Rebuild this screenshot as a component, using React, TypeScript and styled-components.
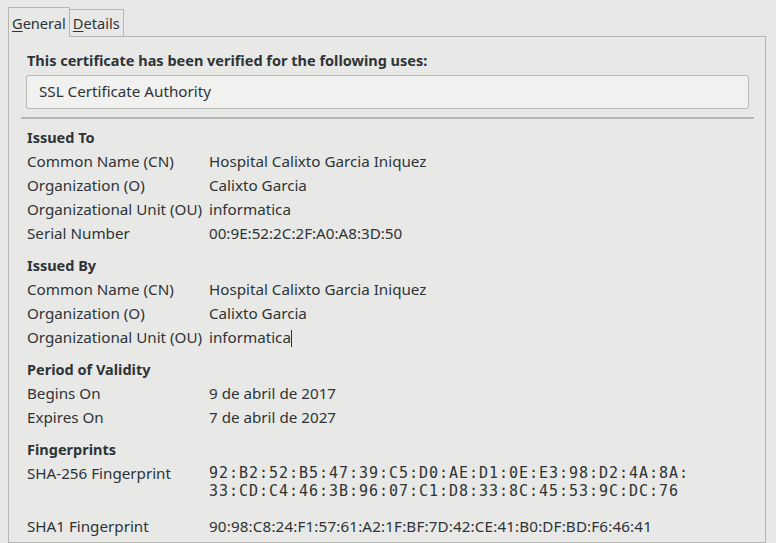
import React from "react";
import styled, { createGlobalStyle } from "styled-components";

const Global = createGlobalStyle`
  html, body { margin: 0; padding: 0; background: #e8e8e7; }
  body { font-family: "Noto Sans", "DejaVu Sans", sans-serif; color: #2e3436; font-size: 15.2px; }
`;

const Root = styled.div`
  padding: 7px 10px 0 8px;
  height: 543px;
  box-sizing: border-box;
  overflow: hidden;
  display: flex;
  flex-direction: column;
`;

const TabBar = styled.div`
  display: flex;
  align-items: flex-end;
  height: 30px;
  font-size: 14.6px;
`;

const Tab = styled.div<{ $active?: boolean }>`
  box-sizing: border-box;
  height: ${(p) => (p.$active ? 30 : 28)}px;
  padding: 0 3px;
  display: flex;
  align-items: center;
  border: 1px solid #b6b6b3;
  border-bottom: ${(p) => (p.$active ? "none" : "1px solid #b6b6b3")};
  margin-left: ${(p) => (p.$active ? 0 : -1)}px;
  color: #2e3436;
`;

const Mnemonic = styled.span`
  text-decoration: underline;
  text-underline-offset: 2px;
`;

const Filler = styled.div`
  flex: 1;
  border-bottom: 1px solid #b6b6b3;
`;

const Panel = styled.div`
  flex: 1;
  border: 1px solid #b6b6b3;
  border-top: none;
  padding: 11px 11px 0 12px;
`;

const Inner = styled.div`
  padding: 0 5px 0 6px;
`;

const Strong = styled.div`
  font-weight: 700;
  font-size: 14.5px;
  line-height: 24px;
  height: 24px;
`;

const UsesBox = styled.div`
  margin: 3px 0 0 -1px;
  height: 34px;
  box-sizing: border-box;
  border: 1px solid #b8b8b5;
  border-radius: 3px;
  background: #f1f1f0;
  padding: 0 12px 2px;
  display: flex;
  align-items: center;
`;

const Separator = styled.hr`
  margin: 8px 0 6px;
  border: none;
  height: 2px;
  background: #b6b6b3;
`;

const Section = styled.div`
  display: grid;
  grid-template-columns: 182px 1fr;
  grid-auto-rows: minmax(24px, auto);
  align-items: start;
  & + & { margin-top: 8px; }
`;

const SectionTitle = styled.div`
  grid-column: 1 / -1;
  font-weight: 700;
  font-size: 14.5px;
  line-height: 24px;
`;

const Label = styled.div`
  line-height: 24px;
  white-space: nowrap;
`;

const Value = styled.div<{ $tight?: boolean }>`
  line-height: 24px;
  white-space: nowrap;
  letter-spacing: ${(p) => (p.$tight ? "0.15px" : "normal")};
`;

const Mono = styled.div`
  font-family: "DejaVu Sans Mono", monospace;
  font-size: 15px;
  letter-spacing: 0.97px;
  line-height: 18px;
  padding: 3px 0 14px;
  white-space: pre;
`;

const Caret = styled.span`
  display: inline-block;
  width: 1px;
  height: 17px;
  background: #2e3436;
  vertical-align: -4px;
`;

type Row = [string, React.ReactNode];

const sections: { title: string; rows: Row[] }[] = [
  {
    title: "Issued To",
    rows: [
      ["Common Name (CN)", "Hospital Calixto Garcia Iniquez"],
      ["Organization (O)", "Calixto Garcia"],
      ["Organizational Unit (OU)", "informatica"],
      ["Serial Number", "00:9E:52:2C:2F:A0:A8:3D:50"],
    ],
  },
  {
    title: "Issued By",
    rows: [
      ["Common Name (CN)", "Hospital Calixto Garcia Iniquez"],
      ["Organization (O)", "Calixto Garcia"],
      ["Organizational Unit (OU)", <>informatica<Caret /></>],
    ],
  },
  {
    title: "Period of Validity",
    rows: [
      ["Begins On", "9 de abril de 2017"],
      ["Expires On", "7 de abril de 2027"],
    ],
  },
];

export default function App() {
  return (
    <>
      <Global />
      <Root>
        <TabBar>
          <Tab $active>
            <Mnemonic>G</Mnemonic>eneral
          </Tab>
          <Tab>
            <Mnemonic>D</Mnemonic>etails
          </Tab>
          <Filler />
        </TabBar>
        <Panel>
          <Inner>
            <Strong>This certificate has been verified for the following uses:</Strong>
            <UsesBox>SSL Certificate Authority</UsesBox>
          </Inner>
          <Separator />
          <Inner>
            {sections.map((s) => (
              <Section key={s.title}>
                <SectionTitle>{s.title}</SectionTitle>
                {s.rows.map(([l, v], i) => (
                  <React.Fragment key={i}>
                    <Label>{l}</Label>
                    <Value>{v}</Value>
                  </React.Fragment>
                ))}
              </Section>
            ))}
            <Section>
              <SectionTitle>Fingerprints</SectionTitle>
              <Label>SHA-256 Fingerprint</Label>
              <Mono>{"92:B2:52:B5:47:39:C5:D0:AE:D1:0E:E3:98:D2:4A:8A:\n33:CD:C4:46:3B:96:07:C1:D8:33:8C:45:53:9C:DC:76"}</Mono>
              <Label>SHA1 Fingerprint</Label>
              <Value $tight>90:98:C8:24:F1:57:61:A2:1F:BF:7D:42:CE:41:B0:DF:BD:F6:46:41</Value>
            </Section>
          </Inner>
        </Panel>
      </Root>
    </>
  );
}
